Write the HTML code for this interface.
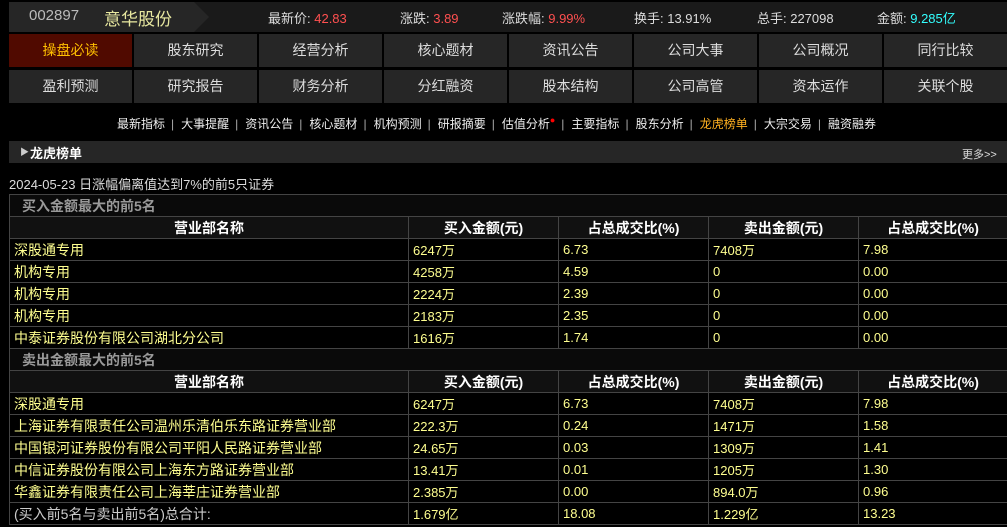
<!DOCTYPE html>
<html><head><meta charset="utf-8"><style>
*{margin:0;padding:0;box-sizing:border-box}
body{width:1007px;height:527px;background:#000;font-family:"Liberation Sans","Noto Sans CJK SC",sans-serif;color:#ddd;position:relative;overflow:hidden;font-size:13px}
.top{position:absolute;left:9px;top:2px;width:998px;height:30px;background:#1a1a1a}
.tab{position:absolute;left:9px;top:2px;width:200px;height:30px;background:#262626;clip-path:polygon(0 0,185px 0,200px 15px,185px 30px,0 30px)}
.abs{position:absolute;white-space:nowrap}
.nav{position:absolute;left:9px;top:34px;width:998px}
.cell{position:absolute;width:123px;height:33px;background:#262626;color:#ddd;font-size:14px;text-align:center;line-height:33px}
.sub{position:absolute;top:115px;left:117px;font-size:12px;color:#eee;white-space:nowrap}
.sub span.s{color:#aaa;margin:0 7px 0 6px}
.sec{position:absolute;left:9px;top:141px;width:998px;height:22px;background:#262626}
table{position:absolute;left:9px;border-collapse:collapse;width:998px;font-size:13px;table-layout:fixed}
td{border:1px solid #444;height:22px;padding:0 4px;color:#ffff90;white-space:nowrap;overflow:hidden;vertical-align:middle}
td:first-child{font-size:14px}
tr.t td{color:#999;font-weight:bold;font-size:14px;padding-left:12px;background:#0a0a0a}
tr.h td{color:#fff;font-weight:bold;text-align:center;font-size:14px;background:#111}
</style></head><body>
<div class="top"></div><div class="tab"></div>
<div class="abs" style="left:29px;top:7px;font-size:15px;color:#bbb">002897</div>
<div class="abs" style="left:104px;top:5px;font-size:17px;color:#e8e8a0">意华股份</div>
<div class="abs" style="left:268px;top:8px;font-size:13px;color:#ddd">最新价: <span style="color:#ff5050">42.83</span></div>
<div class="abs" style="left:400px;top:8px;font-size:13px;color:#ddd">涨跌: <span style="color:#ff5050">3.89</span></div>
<div class="abs" style="left:502px;top:8px;font-size:13px;color:#ddd">涨跌幅: <span style="color:#ff5050">9.99%</span></div>
<div class="abs" style="left:634px;top:8px;font-size:13px;color:#ddd">换手: 13.91%</div>
<div class="abs" style="left:757px;top:8px;font-size:13px;color:#ddd">总手: 227098</div>
<div class="abs" style="left:877px;top:8px;font-size:13px;color:#ddd">金额: <span style="color:#3ff">9.285亿</span></div>
<div class="nav">
<div class="cell" style="left:0;top:0;background:#500a00;color:#ffc000">操盘必读</div>
<div class="cell" style="left:125px;top:0">股东研究</div>
<div class="cell" style="left:250px;top:0">经营分析</div>
<div class="cell" style="left:375px;top:0">核心题材</div>
<div class="cell" style="left:500px;top:0">资讯公告</div>
<div class="cell" style="left:625px;top:0">公司大事</div>
<div class="cell" style="left:750px;top:0">公司概况</div>
<div class="cell" style="left:875px;top:0">同行比较</div>
<div class="cell" style="left:0;top:36px">盈利预测</div>
<div class="cell" style="left:125px;top:36px">研究报告</div>
<div class="cell" style="left:250px;top:36px">财务分析</div>
<div class="cell" style="left:375px;top:36px">分红融资</div>
<div class="cell" style="left:500px;top:36px">股本结构</div>
<div class="cell" style="left:625px;top:36px">公司高管</div>
<div class="cell" style="left:750px;top:36px">资本运作</div>
<div class="cell" style="left:875px;top:36px">关联个股</div>
</div>
<div class="sub">最新指标<span class="s">|</span>大事提醒<span class="s">|</span>资讯公告<span class="s">|</span>核心题材<span class="s">|</span>机构预测<span class="s">|</span>研报摘要<span class="s">|</span>估值分析<span style="color:red;font-size:9px;vertical-align:top">●</span><span class="s">|</span>主要指标<span class="s">|</span>股东分析<span class="s">|</span><span style="color:#ffb020">龙虎榜单</span><span class="s">|</span>大宗交易<span class="s">|</span>融资融券</div>
<div class="sec"></div>
<div class="abs" style="left:20px;top:145px;font-size:9px;color:#ccc">▶</div>
<div class="abs" style="left:30px;top:143px;font-size:13px;font-weight:bold;color:#fff">龙虎榜单</div>
<div class="abs" style="left:962px;top:146px;font-size:11px;color:#ddd">更多&gt;&gt;</div>
<div class="abs" style="left:9px;top:174px;font-size:13px;color:#ddd">2024-05-23 日涨幅偏离值达到7%的前5只证券</div>
<table style="top:194px">
<colgroup><col style="width:399px"><col style="width:150px"><col style="width:150px"><col style="width:150px"><col style="width:149px"></colgroup>
<tr class="t"><td colspan="5">买入金额最大的前5名</td></tr>
<tr class="h"><td>营业部名称</td><td>买入金额(元)</td><td>占总成交比(%)</td><td>卖出金额(元)</td><td>占总成交比(%)</td></tr>
<tr><td>深股通专用</td><td>6247万</td><td>6.73</td><td>7408万</td><td>7.98</td></tr>
<tr><td>机构专用</td><td>4258万</td><td>4.59</td><td>0</td><td>0.00</td></tr>
<tr><td>机构专用</td><td>2224万</td><td>2.39</td><td>0</td><td>0.00</td></tr>
<tr><td>机构专用</td><td>2183万</td><td>2.35</td><td>0</td><td>0.00</td></tr>
<tr><td>中泰证券股份有限公司湖北分公司</td><td>1616万</td><td>1.74</td><td>0</td><td>0.00</td></tr>
<tr class="t"><td colspan="5">卖出金额最大的前5名</td></tr>
<tr class="h"><td>营业部名称</td><td>买入金额(元)</td><td>占总成交比(%)</td><td>卖出金额(元)</td><td>占总成交比(%)</td></tr>
<tr><td>深股通专用</td><td>6247万</td><td>6.73</td><td>7408万</td><td>7.98</td></tr>
<tr><td>上海证券有限责任公司温州乐清伯乐东路证券营业部</td><td>222.3万</td><td>0.24</td><td>1471万</td><td>1.58</td></tr>
<tr><td>中国银河证券股份有限公司平阳人民路证券营业部</td><td>24.65万</td><td>0.03</td><td>1309万</td><td>1.41</td></tr>
<tr><td>中信证券股份有限公司上海东方路证券营业部</td><td>13.41万</td><td>0.01</td><td>1205万</td><td>1.30</td></tr>
<tr><td>华鑫证券有限责任公司上海莘庄证券营业部</td><td>2.385万</td><td>0.00</td><td>894.0万</td><td>0.96</td></tr>
<tr><td style="color:#ccc">(买入前5名与卖出前5名)总合计:</td><td>1.679亿</td><td>18.08</td><td>1.229亿</td><td>13.23</td></tr>
</table>
</body></html>
